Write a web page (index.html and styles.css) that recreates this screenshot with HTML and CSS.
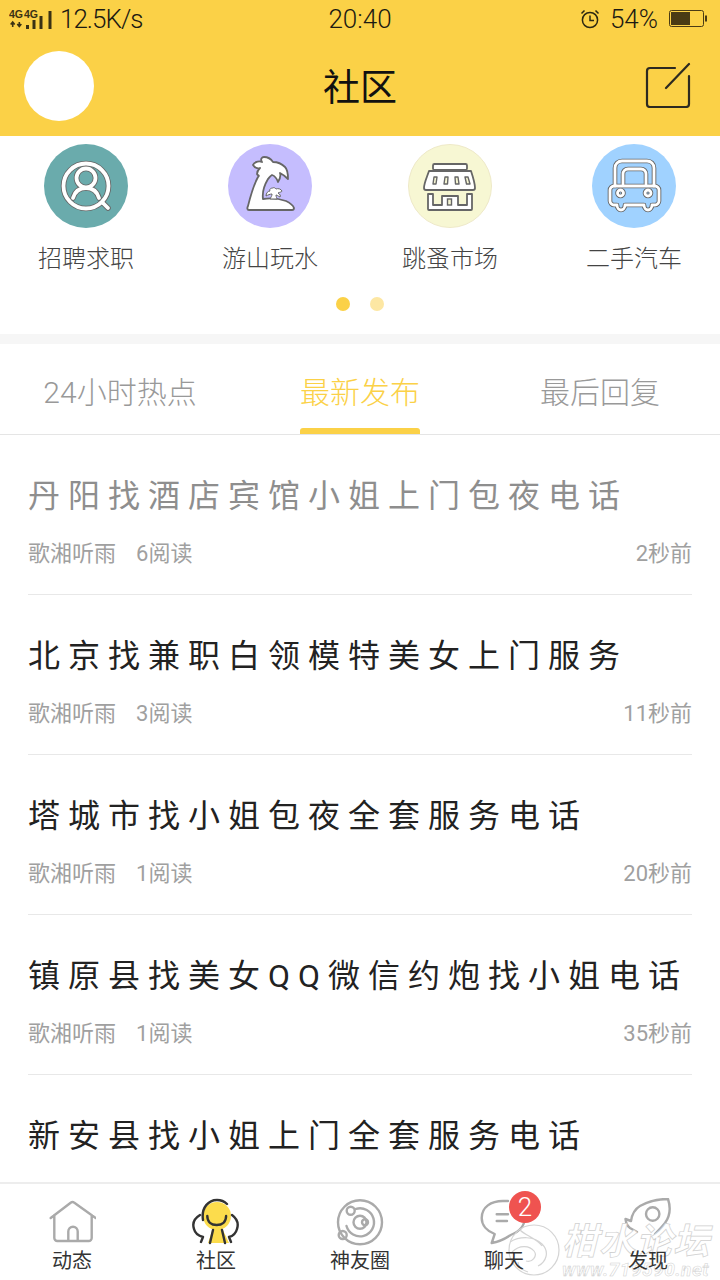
FILE: index.html
```html
<!DOCTYPE html>
<html lang="zh">
<head>
<meta charset="utf-8">
<title>社区</title>
<link rel="stylesheet" href="styles.css">
</head>
<body>
<div class="app">
  <div class="top">
    <div class="status">
      <div class="status-left">
        <svg class="signal" width="44" height="22" viewBox="0 -3 44 22">
          <text class="net" x="0" y="7">4G</text><text class="net" x="15" y="7">4G</text>
          <path class="arrows" d="M3.700 16v-4M1.700 13.500l2-2.500 2 2.500M10.300 11v4M8.300 13l2 2.500 2-2.500"/>
          <rect class="bar" x="17" y="14" width="3" height="4"/>
          <rect class="bar" x="23.500" y="9" width="3" height="9"/>
          <rect class="bar" x="30.500" y="5" width="3" height="13"/>
          <rect class="bar" x="39.500" y="0" width="3" height="18"/>
        </svg>
        <span class="speed">12.5K/s</span>
      </div>
      <div class="status-time">20:40</div>
      <div class="status-right">
        <svg width="20" height="20" viewBox="0 0 20 20" class="alarm">
          <circle cx="10" cy="11" r="7.600"/><path d="M10 6.500V11.500H14M1.500 4.500L4.500 1.500M18.500 4.500L15.500 1.500"/>
        </svg>
        <span class="pct">54%</span>
        <svg class="battery" width="38" height="18" viewBox="0 0 38 18">
          <rect class="b-shell" x="0.500" y="0.500" width="34" height="16" rx="2"/>
          <rect class="b-fill" x="2" y="2" width="19" height="13"/>
          <rect class="b-tip" x="36" y="5.500" width="2" height="6"/>
        </svg>
      </div>
    </div>
    <header class="header">
      <div class="avatar"></div>
      <h1 class="title">社区</h1>
      <svg class="edit" width="46" height="46" viewBox="0 0 46 46">
        <path d="M30 6H5a3 3 0 0 0-3 3v33a3 3 0 0 0 3 3h36a3 3 0 0 0 3-3V14M21 26L44 2"/>
      </svg>
    </header>
  </div>

  <section class="cats">
    <div class="cat-row">
      <div class="cat">
        <svg class="cat-icon" viewBox="0 0 84 84">
          <circle class="c-teal" cx="42" cy="42" r="42"/>
          <g class="dbl-under">
            <circle cx="42" cy="42" r="22.500"/><circle cx="42" cy="34" r="9.500"/><path d="M29 54c2-7 7-10 13-10s11 3 13 10"/><path d="M59 59l5 5"/>
          </g>
          <g class="dbl-over">
            <circle cx="42" cy="42" r="22.500"/><circle cx="42" cy="34" r="9.500"/><path d="M29 54c2-7 7-10 13-10s11 3 13 10"/><path d="M59 59l5 5"/>
          </g>
        </svg>
        <div class="cat-name">招聘求职</div>
      </div>
      <div class="cat cat-wide">
        <svg class="cat-icon" viewBox="0 0 84 84">
          <circle class="c-purple" cx="42" cy="42" r="42"/>
          <path class="solid" d="M20 62C22 54 25 42 30 33 32 31 30 32 29 30 29 27 31 25 32 24 29 25 27 24 25 21 27 17 32 17 34 18 32 15 34 13 36 13 40 13 43 15 45 18 50 18 54 20 57 23 60 26 60 31 60 35 57 32 54 30 52 29 53 32 52 35 50 38 49 35 47 32 44 31 42 32 41 34 40 35 37 40 34 48 35 55 42 54 52 55 58 57 62 59 65 61 66 64 66 65 65 66 64 66H21C19 66 19 64 20 62Z"/>
          <path class="solid thin" d="M42 55C43 53 44 52 44 50 42 50 40 51 38 52 38 49 40 47 42 47 41 45 43 44 45 44 46 43 47 44 48 45 50 44 53 45 54 47 54 48 52 48 50 49 52 50 53 52 52 53 50 52 49 51 48 51 48 53 49 54 49 55Z"/>
        </svg>
        <div class="cat-name">游山玩水</div>
      </div>
      <div class="cat cat-narrow">
        <svg class="cat-icon" viewBox="0 0 84 84">
          <circle class="c-cream" cx="42" cy="42" r="41.500"/>
          <rect class="solid" x="25" y="20" width="34" height="6" rx="1.500"/>
          <path class="solid" d="M21 27h42c2 6 4 12 4 17 0 1-1 2-2 2H18c-1 0-2-1-2-2 0-5 3-11 5-17z"/>
          <path class="win" d="M26 33h3l-1 7h-3zM37 33h3l-.5 7h-3.500zM47 33h3l1 7h-3.500zM57 33h3l2 7h-3.500z"/>
          <path class="solid" d="M20 50h5v11h9v-9h16v9h9v-11h5v15a1 1 0 0 1-1 1H21a1 1 0 0 1-1-1z"/>
          <rect class="win-dark" x="39.500" y="55" width="4" height="6"/>
        </svg>
        <div class="cat-name">跳蚤市场</div>
      </div>
      <div class="cat cat-wide">
        <svg class="cat-icon" viewBox="0 0 84 84">
          <circle class="c-blue" cx="42" cy="42" r="42"/>
          <g class="dbl-under car">
            <path d="M23 42V24c0-4 3-7 7-7h25c4 0 7 3 7 7v18"/><path d="M31 40V30c0-3 2-5 5-5h13c3 0 5 2 5 5v10"/>
            <path d="M22 42h41c2 0 4 2 4 4v11c0 2-2 4-4 4h-3c0 3-2 5-4 5s-4-2-4-5H33c0 3-2 5-4 5s-4-2-4-5h-3c-2 0-4-2-4-4V46c0-2 2-4 4-4z"/>
            <circle cx="28.500" cy="49" r="3"/><circle cx="56" cy="49" r="3"/>
          </g>
          <g class="dbl-over car">
            <path d="M23 42V24c0-4 3-7 7-7h25c4 0 7 3 7 7v18"/><path d="M31 40V30c0-3 2-5 5-5h13c3 0 5 2 5 5v10"/>
            <path d="M22 42h41c2 0 4 2 4 4v11c0 2-2 4-4 4h-3c0 3-2 5-4 5s-4-2-4-5H33c0 3-2 5-4 5s-4-2-4-5h-3c-2 0-4-2-4-4V46c0-2 2-4 4-4z"/>
            <circle cx="28.500" cy="49" r="3"/><circle cx="56" cy="49" r="3"/>
          </g>
        </svg>
        <div class="cat-name">二手汽车</div>
      </div>
    </div>
    <div class="dots"><span class="dot dot-on"></span><span class="dot"></span></div>
  </section>

  <nav class="tabs">
    <div class="tab">24小时热点</div>
    <div class="tab tab-on">最新发布</div>
    <div class="tab">最后回复</div>
  </nav>

  <main class="list">
    <article class="item item-read">
      <h2 class="item-title">丹阳找酒店宾馆小姐上门包夜电话</h2>
      <div class="meta"><span>歌湘听雨</span><span class="reads">6阅读</span><span class="ago">2秒前</span></div>
    </article>
    <article class="item">
      <h2 class="item-title">北京找兼职白领模特美女上门服务</h2>
      <div class="meta"><span>歌湘听雨</span><span class="reads">3阅读</span><span class="ago">11秒前</span></div>
    </article>
    <article class="item">
      <h2 class="item-title">塔城市找小姐包夜全套服务电话</h2>
      <div class="meta"><span>歌湘听雨</span><span class="reads">1阅读</span><span class="ago">20秒前</span></div>
    </article>
    <article class="item">
      <h2 class="item-title">镇原县找美女QQ微信约炮找小姐电话</h2>
      <div class="meta"><span>歌湘听雨</span><span class="reads">1阅读</span><span class="ago">35秒前</span></div>
    </article>
    <article class="item">
      <h2 class="item-title">新安县找小姐上门全套服务电话</h2>
    </article>
  </main>

  <footer class="bottom">
    <div class="nav">
      <svg class="nav-icon line" viewBox="0 0 48 48">
        <path d="M2.700 20L23 4.500a2.500 2.500 0 0 1 3 0L47.700 20M6.300 17v23a3 3 0 0 0 3 3h31.400a3 3 0 0 0 3-3V17M20.300 43V33.500a4.700 4.700 0 0 1 9.400 0V43"/>
      </svg>
      <div class="nav-label">动态</div>
    </div>
    <div class="nav">
      <svg class="nav-icon" viewBox="0 0 48 48">
        <circle class="yel" cx="25" cy="18" r="14"/>
        <path class="yel" d="M21 30h9l7 15H16z"/>
        <path class="ink" d="M11 22C9 9 17 2 25 2c4 0 7 1 10 4M15.300 18c0 6 4 9 9.400 9s9.400-3 9.400-9M8 17c-5 3-8 8-6 14 1 4 5 7 9 8l-2 5M40 17c4 3 7 8 5 14-1 4-4 7-8 8l2 5M21 32l-3 13M30 32l3 13"/>
      </svg>
      <div class="nav-label">社区</div>
    </div>
    <div class="nav">
      <svg class="nav-icon line" viewBox="0 0 48 48">
        <circle cx="24" cy="24.300" r="22"/>
        <path d="M20 10.900A14 14 0 1 1 10.500 28"/>
        <circle cx="14.700" cy="12.700" r="4"/><circle cx="6.700" cy="37" r="4"/>
        <circle cx="24" cy="24.300" r="6.500"/><circle cx="29" cy="24.300" r="3"/>
      </svg>
      <div class="nav-label">神友圈</div>
    </div>
    <div class="nav">
      <svg class="nav-icon line" viewBox="0 0 48 48">
        <path d="M28 3H23C11 3 1.700 9 1.700 20c0 7 5 13 13 16l-3 9c6-1 13-4 19-8 8-3 14-9 14-17"/>
        <path d="M16.700 16.300H28M16.700 23H27"/>
      </svg>
      <div class="badge">2</div>
      <div class="nav-label">聊天</div>
    </div>
    <div class="nav">
      <svg class="nav-icon line" viewBox="0 0 48 48">
        <path d="M44 1C34 1 23 4 16 8 11 11 8 16 7 23L1.500 21C2 25 3 28 6 30L13 34M44 1C47 10 46 18 41 25 38 29 35 32 31 36L31 41"/>
        <circle cx="28.700" cy="16" r="6.700"/>
      </svg>
      <div class="nav-label">发现</div>
    </div>
    <div class="mark" aria-hidden="true">
      <svg class="mark-swirl" width="56" height="56" viewBox="0 0 56 56">
        <circle cx="30" cy="28" r="25"/>
        <path d="M8 30c8-8 18-6 22-1s-2 12-8 10M6 20c10-6 24-6 32 2s4 18-4 22M16 8c6 6 16 8 22 16M24 50c-6-2-10-6-10-10"/>
      </svg>
      <div class="mark-text">
        <div class="mark-big">柑水论坛</div>
        <div class="mark-url">www.719590.net</div>
      </div>
    </div>
  </footer>
</div>
</body>
</html>
```
FILE: styles.css
```css
* { box-sizing: border-box; }
html, body { margin: 0; padding: 0; background: #fff; }
body { font-family: "Roboto", "Noto Sans CJK SC", sans-serif; font-weight: 300; }
.app { position: relative; width: 720px; height: 1280px; display: flex; flex-direction: column; overflow: hidden; background: #fff; }

.top { background: #FBD147; height: 136px; flex: none; }
.status { height: 40px; display: grid; grid-template-columns: 1fr auto 1fr; align-items: center; padding: 0 11px 2px 11px; color: #1c1a12; font-size: 26px; font-weight: 300; }
.status-left { display: flex; align-items: center; gap: 7px; margin-left: -2px; }
.speed { letter-spacing: -1px; }
.signal { flex: none; }
.net { font: 700 10.500px "Liberation Sans", sans-serif; fill: #3a3214; }
.arrows { fill: none; stroke: #3a3214; stroke-width: 1.600; }
.bar { fill: #3a3214; }
.status-right { display: flex; align-items: center; justify-content: flex-end; margin-right: 2px; }
.alarm { fill: none; stroke: #2c2812; stroke-width: 1.500; margin-right: 10px; }
.pct { margin-right: 11px; }
.battery { flex: none; }
.b-shell { fill: none; stroke: #4a3b14; stroke-width: 1; }
.b-fill, .b-tip { fill: #4a3b14; }

.header { position: relative; height: 96px; display: flex; align-items: center; justify-content: space-between; padding: 0 29px 0 24px; }
.avatar { width: 70px; height: 70px; border-radius: 50%; background: #fff; margin-top: -4px; }
.title { position: absolute; left: 0; right: 0; top: 22px; margin: 0; text-align: center; font-size: 37px; font-weight: 400; line-height: 54px; color: #111; }
.edit { fill: none; stroke: #2d2a20; stroke-width: 2.200; stroke-linecap: round; margin-top: -6px; }

.cats { height: 198px; flex: none; padding-top: 8px; }
.cat-row { display: flex; padding-left: 38px; }
.cat { width: 96px; display: flex; flex-direction: column; align-items: center; }
.cat-wide { margin-left: 88px; }
.cat-narrow { margin-left: 84px; }
.cat-icon { width: 84px; height: 84px; flex: none; }
.cat-name { margin-top: 14px; font-size: 24px; line-height: 34px; color: #444; white-space: nowrap; }
.c-teal { fill: #6AABAC; }
.c-purple { fill: #C5BDFE; }
.c-cream { fill: #F7F7D3; stroke: #eee9c8; stroke-width: 1; }
.c-blue { fill: #A0D2FF; }
.dbl-under, .dbl-over { fill: none; stroke-linecap: round; stroke-linejoin: round; }
.dbl-under { stroke: #666; stroke-width: 5.500; }
.dbl-over { stroke: #fff; stroke-width: 3.800; }
.car.dbl-under { stroke-width: 4.600; }
.car.dbl-over { stroke-width: 2.800; }
.solid { fill: #fff; stroke: #666; stroke-width: 1.800; stroke-linejoin: round; }
.thin { stroke-width: 1; }
.win { fill: #F7F7D3; stroke: #666; stroke-width: 1.400; stroke-linejoin: round; }
.win-dark { fill: #F7F7D3; stroke: #666; stroke-width: 1.400; }

.dots { display: flex; justify-content: center; gap: 20px; margin-top: 21px; }
.dot { width: 14px; height: 14px; border-radius: 50%; background: #FDE7A3; }
.dot-on { background: #FBD147; }

.tabs { height: 101px; flex: none; display: grid; grid-template-columns: repeat(3, 1fr); border-top: 10px solid #F6F6F6; border-bottom: 1px solid #E5E5E5; }
.tab { position: relative; display: flex; justify-content: center; align-items: center; padding-top: 2px; font-size: 30px; color: #999; }
.tab-on { color: #FBD147; }
.tab-on::after { content: ""; position: absolute; left: 60px; right: 60px; bottom: 0; height: 6px; border-radius: 3px 3px 0 0; background: #FBD147; }

.list { flex: 1; min-height: 0; overflow: hidden; }
.item { height: 160px; margin: 0 28px; padding-top: 37px; border-bottom: 1px solid #E8E8E8; }
.item-title { margin: 0; font-size: 32px; font-weight: 400; line-height: 48px; letter-spacing: 8px; color: #222; white-space: nowrap; }
.item-read .item-title { color: #8E8E8E; }
.meta { display: flex; margin-top: 18px; font-size: 22px; font-weight: 400; line-height: 32px; color: #A0A0A0; }
.reads { margin-left: 20px; }
.ago { margin-left: auto; }

.bottom { position: relative; height: 98px; flex: none; display: grid; grid-template-columns: repeat(5, 1fr); border-top: 2px solid #EDEDED; background: #fff; }
.nav { position: relative; display: flex; flex-direction: column; align-items: center; padding-top: 14px; }
.nav-icon { width: 48px; height: 48px; flex: none; }
.line { fill: none; stroke: #AAA; stroke-width: 2.400; stroke-linecap: round; stroke-linejoin: round; }
.yel { fill: #FCDC4C; }
.ink { fill: none; stroke: #333; stroke-width: 2.400; stroke-linecap: round; stroke-linejoin: round; }
.nav-label { position: relative; z-index: 1; margin-top: 1px; font-size: 20px; font-weight: 400; line-height: 28px; color: #333; }
.badge { position: absolute; left: 77px; top: 7px; width: 32px; height: 32px; border-radius: 50%; background: #EF5350; color: #fff; font-size: 26px; line-height: 32px; text-align: center; }

.mark { position: absolute; left: 504px; top: 38px; display: flex; align-items: flex-start; pointer-events: none; }
.mark-swirl { fill: none; stroke: #d4d4d4; stroke-width: 1.200; flex: none; }
.mark-text { margin-left: 2px; margin-top: 2px; color: #fff; -webkit-text-stroke: 0.700px #d0d0d0; font-style: italic; }
.mark-big { font-size: 36px; line-height: 36px; letter-spacing: 1px; font-weight: 700; }
.mark-url { font-size: 19px; line-height: 20px; letter-spacing: 0.500px; font-weight: 700; -webkit-text-stroke: 0.500px #d0d0d0; }
```
